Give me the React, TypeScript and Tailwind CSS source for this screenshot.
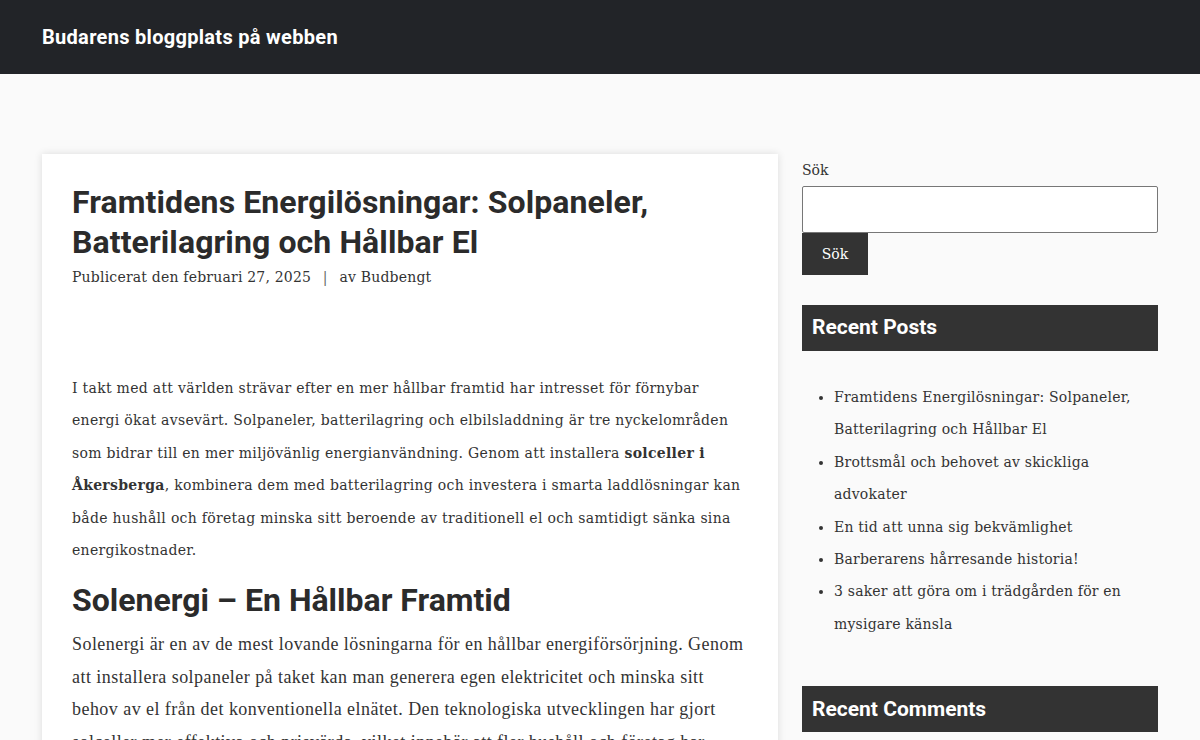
import React from 'react';

const posts = [
  'Framtidens Energilösningar: Solpaneler, Batterilagring och Hållbar El',
  'Brottsmål och behovet av skickliga advokater',
  'En tid att unna sig bekvämlighet',
  'Barberarens hårresande historia!',
  '3 saker att göra om i trädgården för en mysigare känsla',
];

const serif = "font-['DejaVu_Serif',serif]";

export default function App() {
  return (
    <div className="min-h-screen bg-[#fafafa] text-[#333]">
      <header className="h-[74px] bg-[#222428] flex items-center px-[42px]">
        <h1 className="font-['Roboto',sans-serif] font-bold text-[20px] text-white tracking-[0.3px]">
          Budarens bloggplats på webben
        </h1>
      </header>

      <div className="flex gap-[24px] px-[42px] pt-[80px]">
        {/* main article */}
        <main className="w-[736px] shrink-0 bg-white shadow-[0_0_8px_rgba(0,0,0,0.12)] px-[30px] pt-[28px] pb-10">
          <h2 className="font-['Roboto',sans-serif] font-bold text-[32px] leading-[40px] text-[#2b2b2b] tracking-[0.1px]">
            Framtidens Energilösningar: Solpaneler, Batterilagring och Hållbar El
          </h2>
          <div className={`${serif} text-[14px] mt-[5px] text-[#333] tracking-[0.2px]`}>
            Publicerat den februari 27, 2025 <span className="mx-[7px] text-[#666]">|</span> av Budbengt
          </div>

          <p className={`${serif} text-[14px] leading-[32.4px] mt-[84px] text-[#333] tracking-[0.3px]`}>
            I takt med att världen strävar efter en mer hållbar framtid har intresset för förnybar energi ökat avsevärt.
            Solpaneler, batterilagring och elbilsladdning är tre nyckelområden som bidrar till en mer miljövänlig
            energianvändning. Genom att installera <strong className="font-bold">solceller i Åkersberga</strong>, kombinera
            dem med batterilagring och investera i smarta laddlösningar kan både hushåll och företag minska sitt beroende av
            traditionell el och samtidigt sänka sina energikostnader.
          </p>

          <h3 className="font-['Roboto',sans-serif] font-bold text-[32px] leading-[40px] mt-[14px] text-[#2b2b2b]">
            Solenergi – En Hållbar Framtid
          </h3>
          <p className="font-['Liberation_Serif',serif] text-[18px] leading-[32.4px] mt-[8px] text-[#333] tracking-[0.45px]">
            Solenergi är en av de mest lovande lösningarna för en hållbar energiförsörjning. Genom att installera
            solpaneler på taket kan man generera egen elektricitet och minska sitt behov av el från det konventionella
            elnätet. Den teknologiska utvecklingen har gjort solceller mer effektiva och prisvärda, vilket innebär att fler
            hushåll och företag har möjlighet att investera i solenergi.
          </p>
        </main>

        {/* sidebar */}
        <aside className="w-[356px] shrink-0 pt-[6px]">
          <div className={`${serif} text-[14px] leading-[20px]`}>Sök</div>
          <input className="mt-[6px] block w-full h-[47px] border border-[#777] rounded-[2px] bg-white" />
          <button className={`${serif} block h-[42px] w-[66px] bg-[#333] text-white text-[14px]`}>Sök</button>

          <div className="mt-[30px] h-[46px] bg-[#333] flex items-center px-[10px]">
            <span className="font-['Roboto',sans-serif] font-bold text-[21px] text-white">Recent Posts</span>
          </div>
          <ul className={`${serif} text-[14px] leading-[32.4px] list-disc pl-[32px] mt-[30px] tracking-[0.2px]`}>
            {posts.map((p) => (
              <li key={p}>{p}</li>
            ))}
          </ul>

          <div className="mt-[46px] h-[46px] bg-[#333] flex items-center px-[10px]">
            <span className="font-['Roboto',sans-serif] font-bold text-[21px] text-white">Recent Comments</span>
          </div>
        </aside>
      </div>
    </div>
  );
}
